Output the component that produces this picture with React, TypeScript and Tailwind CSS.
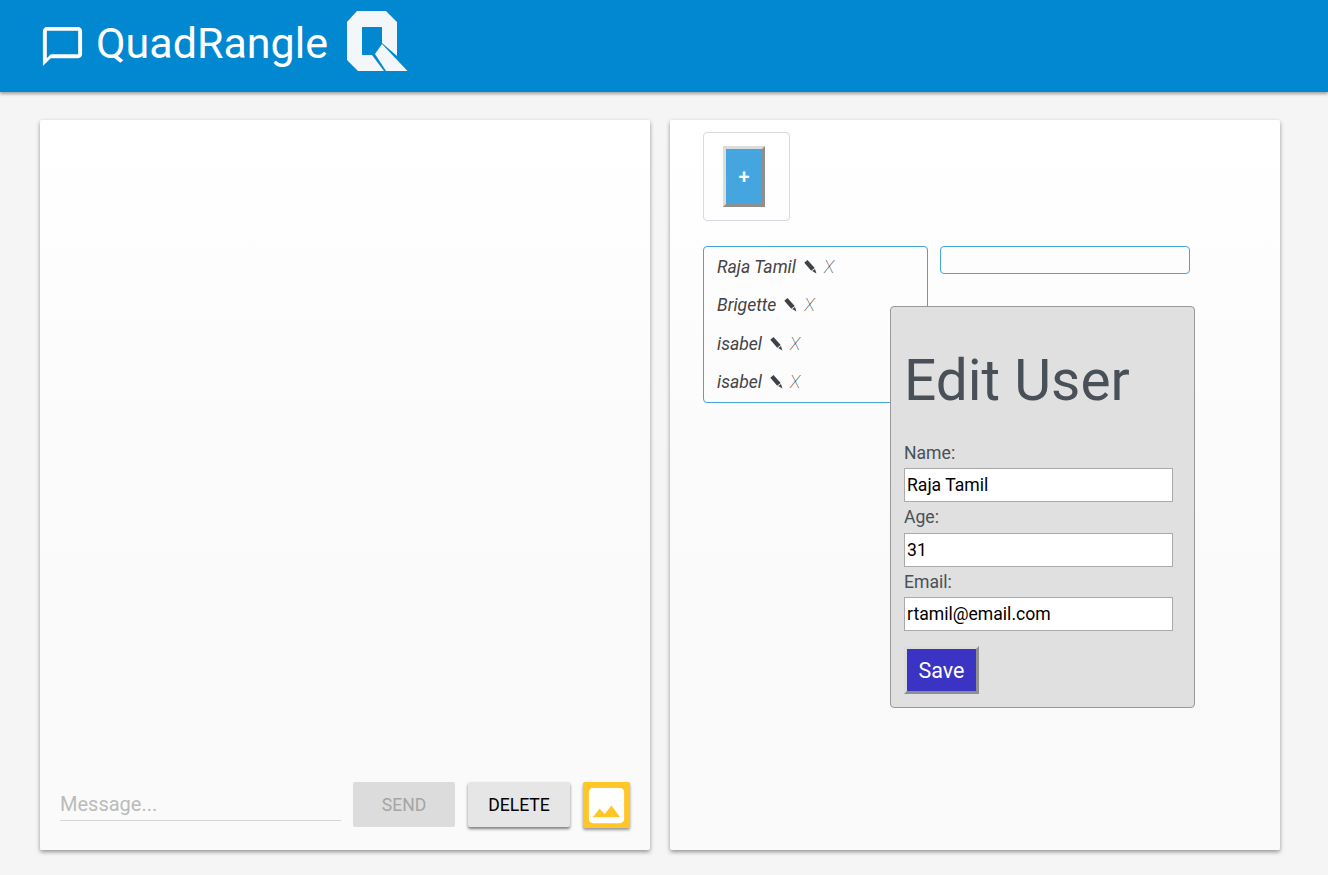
function Logo() {
  return (
    <svg width="61" height="60" viewBox="347 11 61 60" className="mb-[10px] ml-[19px]">
      <path fill="#f4f7f9" d="M357 11H386L397 22V56L382 43V27H362V55H372L384 71H358L347 60V22Z" />
      <path fill="#f4f7f9" d="M382 44L407.500 71H386L375 54Z" />
    </svg>
  );
}

function Pencil() {
  return (
    <svg width="13" height="14" viewBox="0 0 13 14" className="ml-[8px]">
      <path fill="#3d4148" d="M3.500 0L0.300 2.800L7.200 10.800L10.700 8.100Z" />
      <path fill="#3d4148" d="M8.200 11L11 9L12.400 13.400Z" />
    </svg>
  );
}

function Row({ name }: { name: string }) {
  return (
    <div className="flex h-[38.3px] items-center pl-[13px] text-[17.6px] italic text-[#444]">
      <span>{name}</span>
      <Pencil />
      <span className="ml-[7px] font-thin text-[#111]">X</span>
    </div>
  );
}

function Field({ label, value }: { label: string; value: string }) {
  return (
    <div>
      <div className="flex h-[30.5px] items-center text-[17.6px] text-[#495057]">{label}</div>
      <input
        readOnly
        value={value}
        className="h-[34px] w-[269px] border border-[#aaa] bg-white px-[2px] text-[17.6px] text-black outline-none"
      />
    </div>
  );
}

export default function App() {
  return (
    <div className="min-h-[875px] bg-[#f5f5f5] font-['Roboto',sans-serif]">
      <header className="flex h-[92px] items-center bg-[#0288d1] pl-[39px] shadow-[0_2px_3px_rgba(0,0,0,0.35)]">
        <svg width="47" height="47" viewBox="0 0 24 24" fill="white">
          <path d="M20 2H4c-1.100 0-2 .9-2 2v18l4-4h14c1.100 0 2-.9 2-2V4c0-1.100-.9-2-2-2zm0 14H6l-2 2V4h16v12z" />
        </svg>
        <span className="mb-[6px] ml-[10px] text-[43px] text-white">QuadRangle</span>
        <Logo />
      </header>
      <main className="flex gap-[20px] pl-[40px] pt-[28px]">
        <section className="flex h-[730px] w-[610px] flex-col justify-end rounded-[2px] bg-gradient-to-b from-white to-[#fafafa] to-60% px-[20px] pb-[22px] shadow-[0_2px_4px_rgba(0,0,0,0.4)]">
          <div className="flex items-start">
            <div className="mt-[7px] flex h-[32px] w-[281px] items-center border-b border-[#d4d4d4] pb-[2px] text-[20px] text-[#bbb]">Message...</div>
            <button className="ml-[12px] h-[45px] w-[102px] rounded-[2px] bg-[#dcdcdc] pt-[2px] text-[17.6px] text-[#a5a5a5]">SEND</button>
            <button className="ml-[13px] h-[45px] w-[102px] rounded-[2px] bg-[#e6e6e6] pt-[2px] text-[17.6px] text-black shadow-[0_2px_3px_rgba(0,0,0,0.5)]">DELETE</button>
            <button className="ml-[13px] flex h-[46px] w-[47px] items-center justify-center rounded-[2px] bg-[#ffc628] shadow-[0_2px_3px_rgba(0,0,0,0.4)]">
              <svg width="47" height="47" viewBox="0 0 24 24" fill="white">
                <path d="M21 19V5c0-1.100-.9-2-2-2H5c-1.100 0-2 .9-2 2v14c0 1.100.9 2 2 2h14c1.100 0 2-.9 2-2zM8.500 13.500l2.500 3.010L14.500 12l4.500 6H5l3.500-4.500z" />
              </svg>
            </button>
          </div>
        </section>
        <section className="relative h-[730px] w-[610px] rounded-[2px] bg-gradient-to-b from-white to-[#fafafa] to-60% pl-[33px] pt-[12px] shadow-[0_2px_4px_rgba(0,0,0,0.4)]">
          <div className="flex h-[89px] w-[87px] items-center rounded-[4px] border border-[#d5dae0] pl-[19px]">
            <div className="flex h-[61px] w-[42px] items-center justify-center border-[3px] border-b-[#8f8f8f] border-l-[#dcdcdc] border-r-[#8f8f8f] border-t-[#dcdcdc] bg-[#45a5de] pt-[1px] text-[20px] font-semibold text-white">+</div>
          </div>
          <div className="mt-[25px] flex items-start">
            <div className="h-[157px] w-[225px] rounded-[4px] border border-[#42a5dc] py-[1px]">
              <Row name="Raja Tamil" />
              <Row name="Brigette" />
              <Row name="isabel" />
              <Row name="isabel" />
            </div>
            <div className="ml-[12px] h-[28px] w-[250px] rounded-[4px] border border-[#42a5dc]" />
          </div>
          <div className="absolute left-[220px] top-[186px] h-[402px] w-[305px] rounded-[4px] border border-[#999] bg-[#e0e0e0] pl-[13px]">
            <h1 className="mt-[42px] h-[63px] text-[56.8px] leading-[64px] text-[#495057]">Edit User</h1>
            <div className="mt-[25.5px]">
              <Field label="Name:" value="Raja Tamil" />
              <Field label="Age:" value="31" />
              <Field label="Email:" value="rtamil@email.com" />
            </div>
            <button className="mt-[15px] h-[48px] w-[75px] border-[3px] border-b-[#8f8f8f] border-l-[#dcdcdc] border-r-[#8f8f8f] border-t-[#dcdcdc] bg-[#3a33c4] pt-[2px] text-[21.5px] text-white">Save</button>
          </div>
        </section>
      </main>
    </div>
  );
}
